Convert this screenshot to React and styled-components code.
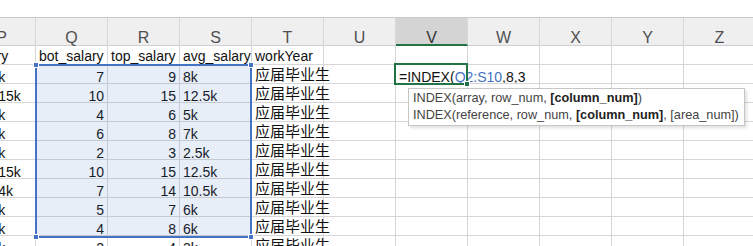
import React from 'react'
import styled, { createGlobalStyle } from 'styled-components'

const GlobalStyle = createGlobalStyle`
  html, body {
    margin: 0;
    padding: 0;
    background: #fff;
  }
  * {
    box-sizing: border-box;
  }
`

const columns = ['P', 'Q', 'R', 'S', 'T', 'U', 'V', 'W', 'X', 'Y', 'Z']

const rows = [
  ['salary', 'bot_salary', 'top_salary', 'avg_salary', 'workYear'],
  ['7k-9k', 7, 9, '8k', '应届毕业生'],
  ['10k-15k', 10, 15, '12.5k', '应届毕业生'],
  ['4k-6k', 4, 6, '5k', '应届毕业生'],
  ['6k-8k', 6, 8, '7k', '应届毕业生'],
  ['2k-3k', 2, 3, '2.5k', '应届毕业生'],
  ['10k-15k', 10, 15, '12.5k', '应届毕业生'],
  ['7k-14k', 7, 14, '10.5k', '应届毕业生'],
  ['5k-7k', 5, 7, '6k', '应届毕业生'],
  ['4k-8k', 4, 8, '6k', '应届毕业生'],
  ['2k-4k', 2, 4, '3k', '应届毕业生'],
]

const gridCols = `68px repeat(10, 72px)`

const Sheet = styled.div`
  position: relative;
  width: 753px;
  height: 246px;
  overflow: hidden;
  background: #fff;
  font-family: 'Liberation Sans', 'Noto Sans CJK SC', sans-serif;
  color: #111;
`

const TopStrip = styled.div`
  height: 18px;
  border-bottom: 1px solid #c9c9c9;
  background: #fff;
`

const HeaderRow = styled.div`
  display: grid;
  grid-template-columns: ${gridCols};
  margin-left: -32px;
  background: #efefef;
`

const HeadCell = styled.div`
  height: 28px;
  padding-top: 12px;
  text-align: center;
  font-size: 16px;
  line-height: 16px;
  color: ${(p) => (p.$active ? '#333' : '#505050')};
  background: ${(p) => (p.$active ? '#d4d4d4' : '#efefef')};
  border-right: 1px solid #d8d8d8;
  border-bottom: ${(p) => (p.$active ? '2px solid #217346' : '1px solid #cfcfcf')};
`

const GridBody = styled.div`
  position: relative;
`

const Row = styled.div`
  display: grid;
  grid-template-columns: ${gridCols};
  margin-left: -32px;
`

const Cell = styled.div`
  height: 19px;
  padding: ${(p) => (p.$cjk ? '0' : p.$label ? '1px' : '3px')} 3px 0;
  font-size: ${(p) => (p.$cjk ? '15px' : '14px')};
  line-height: 19px;
  text-align: ${(p) => p.$align};
  white-space: nowrap;
  border-right: 1px solid #d6d6d6;
  border-bottom: 1px solid #d6d6d6;
`

const Ref = styled.span`
  color: #4472c4;
`

const Selection = styled.div`
  position: absolute;
  left: 35px;
  top: 18px;
  width: 217px;
  height: 174px;
  border: 2px solid #4472c4;
  background: rgba(68, 114, 196, 0.12);
  pointer-events: none;
`

const Handle = styled.span`
  position: absolute;
  width: 6px;
  height: 6px;
  background: ${(p) => p.$color};
  border: 1px solid #fff;
  ${(p) => (p.$top ? 'top: -4px;' : 'bottom: -4px;')}
  ${(p) => (p.$left ? 'left: -4px;' : 'right: -4px;')}
`

const ActiveCell = styled.div`
  position: absolute;
  left: 394px;
  top: 17px;
  width: 74px;
  height: 22px;
  border: 2px solid #217346;
  pointer-events: none;
`

const FormulaTip = styled.div`
  position: absolute;
  left: 408px;
  top: 42px;
  padding: 1px 5px 1px 4px;
  background: #fff;
  border: 1px solid #c6c6c6;
  box-shadow: 2px 2px 3px rgba(0, 0, 0, 0.12);
  font-size: 12.7px;
  line-height: 17px;
  color: #444;
  white-space: nowrap;
  b {
    color: #222;
  }
`

const alignFor = (ri, value) => {
  if (ri > 0 && typeof value === 'number') return 'right'
  return 'left'
}

const App = () => {
  return (
    <>
      <GlobalStyle />
      <Sheet>
        <TopStrip />
        <HeaderRow>
          {columns.map((c) => (
            <HeadCell key={c} $active={c === 'V'}>
              {c}
            </HeadCell>
          ))}
        </HeaderRow>
        <GridBody>
          {rows.map((r, ri) => (
            <Row key={ri}>
              {columns.map((c, ci) => {
                const value = r[ci]
                if (c === 'V' && ri === 1) {
                  return (
                    <Cell key={c} $align="left">
                      =INDEX(<Ref>Q2:S10</Ref>,8,3
                    </Cell>
                  )
                }
                return (
                  <Cell
                    key={c}
                    $label={ri === 0}
                    $align={alignFor(ri, value)}
                    $cjk={typeof value === 'string' && /[\u4e00-\u9fff]/.test(value)}
                  >
                    {value}
                  </Cell>
                )
              })}
            </Row>
          ))}
          <Selection>
            <Handle $color="#4472c4" $top $left />
            <Handle $color="#4472c4" $top />
            <Handle $color="#4472c4" $left />
            <Handle $color="#4472c4" />
          </Selection>
          <ActiveCell>
            <Handle $color="#217346" />
          </ActiveCell>
          <FormulaTip>
            <div>
              INDEX(array, row_num, <b>[column_num]</b>)
            </div>
            <div>
              INDEX(reference, row_num, <b>[column_num]</b>, [area_num])
            </div>
          </FormulaTip>
        </GridBody>
      </Sheet>
    </>
  )
}

export default App
